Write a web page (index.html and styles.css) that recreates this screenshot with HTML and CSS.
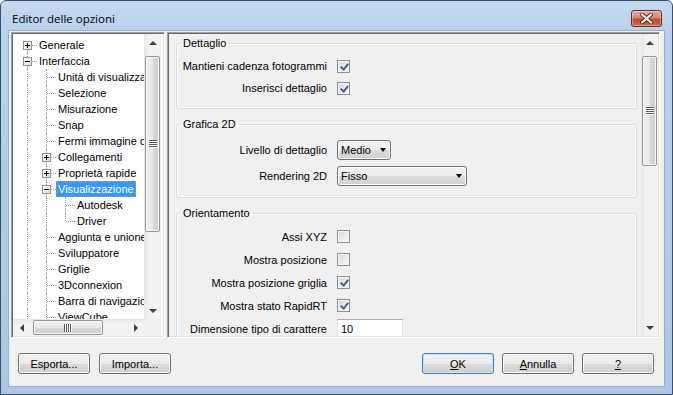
FILE: index.html
```html
<!DOCTYPE html>
<html lang="it">
<head>
  <meta charset="UTF-8" />
  <title>Editor delle opzioni</title>
  <link rel="stylesheet" href="styles.css">
</head>
<body>
  <div class="window">
    <div class="titlebar">
      <span class="title">Editor delle opzioni</span>
      <button class="close" type="button" title="Chiudi">
        <svg width="13" height="11" viewBox="0 0 13 11">
          <path d="M2 1.5L11 9.5M11 1.5L2 9.5" stroke="#5a2018" stroke-width="4" stroke-linecap="round"/>
          <path d="M2 1.5L11 9.5M11 1.5L2 9.5" stroke="#fff" stroke-width="2.2" stroke-linecap="round"/>
        </svg>
      </button>
    </div>

    <div class="client">
      <div class="panes">
        <!-- left: category tree -->
        <div class="tree-box sunken">
          <div class="tree-view">
            <div class="row"><span class="node first"><span class="toggle plus"></span></span><span class="label">Generale</span></div>
            <div class="row"><span class="node"><span class="toggle"></span></span><span class="label">Interfaccia</span></div>
            <div class="row"><span class="guide"></span><span class="node"></span><span class="label">Unità di visualizzazione</span></div>
            <div class="row"><span class="guide"></span><span class="node"></span><span class="label">Selezione</span></div>
            <div class="row"><span class="guide"></span><span class="node"></span><span class="label">Misurazione</span></div>
            <div class="row"><span class="guide"></span><span class="node"></span><span class="label">Snap</span></div>
            <div class="row"><span class="guide"></span><span class="node"></span><span class="label">Fermi immagine di rendering</span></div>
            <div class="row"><span class="guide"></span><span class="node"><span class="toggle plus"></span></span><span class="label">Collegamenti</span></div>
            <div class="row"><span class="guide"></span><span class="node"><span class="toggle plus"></span></span><span class="label">Proprietà rapide</span></div>
            <div class="row"><span class="guide"></span><span class="node"><span class="toggle"></span></span><span class="label selected">Visualizzazione</span></div>
            <div class="row"><span class="guide"></span><span class="guide"></span><span class="node"></span><span class="label">Autodesk</span></div>
            <div class="row"><span class="guide"></span><span class="guide"></span><span class="node last"></span><span class="label">Driver</span></div>
            <div class="row"><span class="guide"></span><span class="node"></span><span class="label">Aggiunta e unione</span></div>
            <div class="row"><span class="guide"></span><span class="node"></span><span class="label">Sviluppatore</span></div>
            <div class="row"><span class="guide"></span><span class="node"></span><span class="label">Griglie</span></div>
            <div class="row"><span class="guide"></span><span class="node"></span><span class="label">3Dconnexion</span></div>
            <div class="row"><span class="guide"></span><span class="node"></span><span class="label">Barra di navigazione</span></div>
            <div class="row"><span class="guide"></span><span class="node"></span><span class="label">ViewCube</span></div>
          </div>
          <div class="vscroll tree-vs">
            <span class="arrow up"></span>
            <div class="track"><div class="thumb"><span class="grip"></span></div></div>
            <span class="arrow down"></span>
          </div>
          <div class="hscroll">
            <span class="arrow left"></span>
            <div class="track"><div class="thumb"><span class="grip"></span></div></div>
            <span class="arrow right"></span>
          </div>
          <div class="corner"></div>
        </div>

        <!-- right: options of the selected node -->
        <div class="options-box sunken">
          <div class="options">
            <fieldset class="group g-detail">
              <legend>Dettaglio</legend>
              <div class="fields">
                <label>Mantieni cadenza fotogrammi</label><span class="check on"></span>
                <label>Inserisci dettaglio</label><span class="check on"></span>
              </div>
            </fieldset>

            <fieldset class="group g-2d">
              <legend>Grafica 2D</legend>
              <div class="fields">
                <label>Livello di dettaglio</label><div class="combo short">Medio<span class="caret"></span></div>
                <label>Rendering 2D</label><div class="combo wide">Fisso<span class="caret"></span></div>
              </div>
            </fieldset>

            <fieldset class="group g-orient">
              <legend>Orientamento</legend>
              <div class="fields">
                <label>Assi XYZ</label><span class="check"></span>
                <label>Mostra posizione</label><span class="check"></span>
                <label>Mostra posizione griglia</label><span class="check on"></span>
                <label>Mostra stato RapidRT</label><span class="check on"></span>
                <label>Dimensione tipo di carattere</label><input class="text" value="10">
              </div>
            </fieldset>
          </div>
          <div class="vscroll opt-vs">
            <span class="arrow up"></span>
            <div class="track"><div class="thumb"><span class="grip"></span></div></div>
            <span class="arrow down"></span>
          </div>
        </div>
      </div>

      <div class="footer">
        <div class="btn-group left">
          <button type="button">Esporta...</button>
          <button type="button">Importa...</button>
        </div>
        <div class="btn-group">
          <button type="button" class="default"><u>O</u>K</button>
          <button type="button"><u>A</u>nnulla</button>
          <button type="button"><u>?</u></button>
        </div>
      </div>
    </div>
  </div>
</body>
</html>
```

FILE: styles.css
```css
* { box-sizing: border-box; }
body { margin: 0; background: #fff; font: 11px "Liberation Sans", Arial, sans-serif; color: #000; }

.window { width: 673px; height: 395px; border: 1px solid #3b4e68; border-radius: 6px 6px 0 0; background: linear-gradient(#c3d9f0, #b9d1ec 30px, #aac7e6); padding: 0 7px 7px; display: flex; flex-direction: column; }

.titlebar { height: 29px; flex: none; display: flex; justify-content: space-between; align-items: flex-start; padding: 0 3px 0 4px; }
.title { font: 11.5px "Open Sans", "Liberation Sans", sans-serif; line-height: 16px; margin-top: 10px; color: #000; }
.close { margin-top: 9px; width: 31px; height: 17px; padding: 0; border: 1px solid #6e2a21; border-radius: 3px; background: linear-gradient(#e7a89b, #d98777 48%, #c4452f 52%, #cf6a52); box-shadow: inset 0 0 0 1px rgba(255,255,255,0.35); display: flex; align-items: center; justify-content: center; }

.client { flex: 1; background: #f0f0f0; border: 1px solid #98afcb; padding: 1px 4px 0 2px; }
.panes { display: flex; gap: 2px; height: 306px; }

.sunken { border: 1px solid; border-color: #a0a0a0 #fff #fff #a0a0a0; box-shadow: inset 1px 1px 0 #696969, inset -1px -1px 0 #e3e3e3; padding: 1px; }

/* tree */
.tree-box { width: 154px; display: grid; grid-template-columns: 1fr 17px; grid-template-rows: 1fr 17px; background: #fff; padding-right: 3px; }
.tree-view { overflow: hidden; padding: 3px 0 0 5px; white-space: nowrap; }
.row { display: flex; height: 16px; }
.guide, .node { width: 19px; flex: none; position: relative; }
.guide::before, .node::before { content: ""; position: absolute; left: 9px; top: 0; bottom: 0; border-left: 1px dotted #a0a0a0; }
.node.first::before { top: 8px; }
.node.last::before { bottom: 8px; }
.node::after { content: ""; position: absolute; left: 10px; right: 0; top: 8px; border-top: 1px dotted #a0a0a0; }
.toggle { position: absolute; left: 5px; top: 4px; width: 9px; height: 9px; border: 1px solid #919191; background: linear-gradient(135deg, #fff, #dedede); z-index: 1; }
.toggle::before { content: ""; position: absolute; left: 1px; top: 3px; width: 5px; height: 1px; background: #000; }
.toggle.plus::after { content: ""; position: absolute; left: 3px; top: 1px; width: 1px; height: 5px; background: #000; }
.label { padding: 0 1px; border: 1px solid transparent; line-height: 14px; }
.label.selected { background: #3399ff; color: #fff; border: 1px dotted #d98c4a; }

/* scrollbars */
.vscroll, .hscroll { display: flex; background: linear-gradient(90deg, #e8e8e8, #f3f3f3 30%, #f3f3f3); }
.vscroll { flex-direction: column; }
.hscroll { background: linear-gradient(#e8e8e8, #f3f3f3 30%, #f3f3f3); }
.arrow { width: 17px; height: 17px; flex: none; display: flex; align-items: center; justify-content: center; }
.arrow::before { content: ""; border: 4px solid transparent; }
.arrow.up::before { border-bottom-color: #404040; border-top-width: 0; }
.arrow.down::before { border-top-color: #404040; border-bottom-width: 0; }
.arrow.left::before { border-right-color: #404040; border-left-width: 0; }
.arrow.right::before { border-left-color: #404040; border-right-width: 0; }
.track { flex: 1; position: relative; }
.thumb { border: 1px solid #959595; border-radius: 2px; display: flex; align-items: center; justify-content: center; box-shadow: inset 0 0 0 1px #f7f7f7; }
.vscroll .thumb { margin: 0 1px; background: linear-gradient(90deg, #f0f0f0, #e7e7e7 50%, #d9d9d9 51%, #cecece); }
.hscroll .thumb { height: 15px; margin-top: 1px; background: linear-gradient(#f0f0f0, #e7e7e7 50%, #d9d9d9 51%, #cecece); }
.vscroll .grip { width: 8px; height: 8px; background: repeating-linear-gradient(#5a5a5a 0 1px, #fff 1px 2px); }
.hscroll .grip { width: 8px; height: 8px; background: repeating-linear-gradient(90deg, #5a5a5a 0 1px, #fff 1px 2px); }
.tree-vs .thumb { margin-top: 5px; height: 176px; }
.hscroll .thumb { width: 70px; margin-left: 3px; }
.corner { background: #f0f0f0; }

/* options */
.options-box { width: 493px; display: grid; grid-template-columns: 1fr 17px; background: #f0f0f0; }
.options { overflow: hidden; padding: 2px 4px 0 7px; }
.opt-vs .thumb { margin-top: 5px; height: 110px; }
.group { margin: 0 0 8px; padding: 0; border: 1px solid #d5dfe5; border-radius: 3px; box-shadow: inset 0 0 0 1px #fff; min-width: 0; }
.group legend { padding: 0 2px; margin-left: 4px; line-height: 14px; }
.fields { display: grid; grid-template-columns: 150px auto; column-gap: 10px; align-items: center; justify-items: start; }
.fields label { justify-self: end; white-space: nowrap; }
.g-detail .fields { grid-auto-rows: 22px; padding: 5px 0 9px; }
.g-2d .fields { grid-auto-rows: 26px; padding: 6px 0 8px; }
.g-orient .fields { grid-auto-rows: 23px; padding: 5px 0 0; }

.check { width: 13px; height: 13px; border: 1px solid #8f8f8f; background: linear-gradient(135deg, #d8d8d8, #fbfbfb); box-shadow: inset 0 0 0 1px #f4f4f4; display: block; position: relative; }
.check.on::after { content: ""; position: absolute; left: 3.5px; top: 1px; width: 3px; height: 6px; border: solid #4a5f97; border-width: 0 2px 2px 0; transform: rotate(40deg); }

.combo { height: 20px; border: 1px solid #707070; border-radius: 3px; background: linear-gradient(#f3f3f3, #ebebeb 50%, #dddddd 51%, #d0d0d0); box-shadow: inset 0 0 0 1px #fcfcfc; display: flex; align-items: center; justify-content: space-between; padding: 0 4px 0 3px; }
.combo.short { width: 54px; }
.combo.wide { width: 130px; }
.caret { border: 4px solid transparent; border-top: 4px solid #000; border-bottom: 0; border-left-width: 3.5px; border-right-width: 3.5px; }
.text { width: 66px; height: 20px; border: 1px solid; border-color: #abadb3 #e2e3ea #e3e9ef #e2e3ea; font: inherit; padding: 0 3px; background: #fff; }

/* footer */
.footer { display: flex; justify-content: space-between; margin-top: 15px; padding: 0 6px 0 7px; }
.btn-group { display: flex; gap: 8px; }
.btn-group.left { gap: 9px; }
button { font: inherit; color: #000; }
.footer button { width: 72px; height: 21px; border: 1px solid #707070; border-radius: 3px; background: linear-gradient(#f2f2f2, #ebebeb 50%, #dddddd 51%, #cfcfcf); box-shadow: inset 0 0 0 1px #fcfcfc; padding: 0; }
.footer button.default { border-color: #3c7fb1; box-shadow: inset 0 0 0 1px #c4e8fb; }
```
